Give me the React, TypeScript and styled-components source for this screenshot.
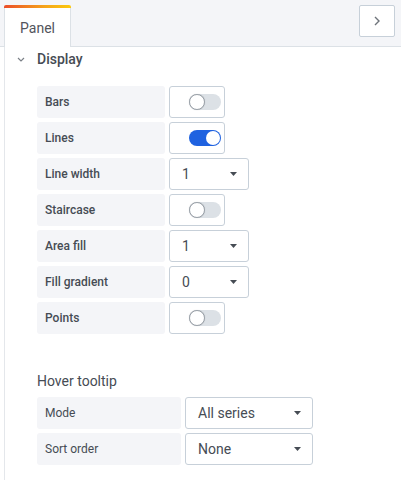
import React from 'react';
import styled, { createGlobalStyle } from 'styled-components';

const Global = createGlobalStyle`
  html, body { margin: 0; padding: 0; background: #fff; }
  body { font-family: Roboto, "Noto Sans", sans-serif; color: #464c54; }
  * { box-sizing: border-box; }
`;

const Page = styled.div`
  width: 401px;
  height: 480px;
  display: flex;
  flex-direction: column;
  background: #fff;
  overflow: hidden;
`;

const TabBar = styled.div`
  height: 47px;
  flex: none;
  background: #f4f5f8;
  border-bottom: 1px solid #dce1e6;
  display: flex;
  align-items: flex-start;
  padding: 0 6px 0 4px;
`;

const Tab = styled.div`
  margin-top: 5px;
  width: 67px;
  height: 42px;
  background: #fff;
  border-left: 1px solid #dce1e6;
  border-right: 1px solid #dce1e6;
  border-top: 3px solid transparent;
  border-image: none;
  position: relative;
  display: flex;
  align-items: center;
  justify-content: center;
  font-size: 14px;
  color: #52545c;
  border-radius: 2px 2px 0 0;
  &::before {
    content: '';
    position: absolute;
    left: -1px;
    right: -1px;
    top: -3px;
    height: 3px;
    border-radius: 2px 2px 0 0;
    background: linear-gradient(90deg, #eb4d2a 0%, #f5a31a 60%, #fbc90e 100%);
  }
`;

const IconButton = styled.div`
  margin-left: auto;
  margin-top: 5px;
  width: 36px;
  height: 32px;
  background: #fff;
  border: 1px solid #c7d0d9;
  border-radius: 2px;
  display: flex;
  align-items: center;
  justify-content: center;
`;

const Content = styled.div`
  flex: 1;
  margin-left: 4px;
  border-left: 1px solid #e4e7eb;
  display: flex;
  flex-direction: column;
`;

const SectionHeader = styled.div`
  height: 24px;
  display: flex;
  align-items: center;
  padding-left: 12px;
  gap: 12px;
  font-size: 14px;
  font-weight: 500;
  color: #464c54;
`;

const FieldList = styled.div<{ $top: number }>`
  margin-top: ${p => p.$top}px;
  padding-left: 32px;
  display: flex;
  flex-direction: column;
  gap: 4px;
`;

const Row = styled.div`
  display: flex;
  gap: 4px;
  height: 32px;
`;

const Label = styled.div<{ $width: number; $weight: number }>`
  width: ${p => p.$width}px;
  height: 32px;
  background: #f4f5f8;
  border-radius: 3px;
  padding: 0 8px;
  display: flex;
  align-items: center;
  font-size: 12px;
  font-weight: ${p => p.$weight};
  color: #464c54;
`;

const SwitchBox = styled.div`
  width: 56px;
  height: 32px;
  border: 1px solid #c7d0d9;
  border-radius: 3px;
  background: #fff;
  display: flex;
  align-items: center;
  justify-content: flex-end;
  padding-right: 3px;
`;

const Track = styled.div<{ $on: boolean }>`
  position: relative;
  width: 32px;
  height: 16px;
  border-radius: 8px;
  background: ${p => (p.$on ? '#1f62e0' : '#dce1e6')};
`;

const Knob = styled.div<{ $on: boolean }>`
  position: absolute;
  top: ${p => (p.$on ? 1 : 0)}px;
  left: ${p => (p.$on ? 17 : 0)}px;
  width: ${p => (p.$on ? 14 : 16)}px;
  height: ${p => (p.$on ? 14 : 16)}px;
  border-radius: 50%;
  background: #fff;
  border: ${p => (p.$on ? 'none' : '1px solid #9aa1a9')};
  box-shadow: ${p => (p.$on ? 'none' : '0 0 1px rgba(0,0,0,0.2)')};
`;

const SelectBox = styled.div<{ $width: number }>`
  width: ${p => p.$width}px;
  height: 32px;
  border: 1px solid #c7d0d9;
  border-radius: 3px;
  background: #fff;
  display: flex;
  align-items: center;
  padding: 0 11px 0 12px;
  font-size: 14px;
  color: #464c54;
`;

const SelectValue = styled.span`
  flex: 1;
`;

const SubTitle = styled.div`
  margin-top: 39px;
  padding-left: 32px;
  font-size: 14px;
  line-height: 16px;
  color: #464c54;
`;

const Caret = () => (
  <svg width="7" height="4" viewBox="0 0 7 4">
    <path d="M0 0 L7 0 L3.5 4 Z" fill="#464c54" />
  </svg>
);

const Switch = ({ on }: { on: boolean }) => (
  <SwitchBox>
    <Track $on={on}>
      <Knob $on={on} />
    </Track>
  </SwitchBox>
);

const Select = ({ value, width }: { value: string; width: number }) => (
  <SelectBox $width={width}>
    <SelectValue>{value}</SelectValue>
    <Caret />
  </SelectBox>
);

type Field = { label: string; kind: 'switch' | 'select'; on?: boolean; value?: string };

const displayFields: Field[] = [
  { label: 'Bars', kind: 'switch', on: false },
  { label: 'Lines', kind: 'switch', on: true },
  { label: 'Line width', kind: 'select', value: '1' },
  { label: 'Staircase', kind: 'switch', on: false },
  { label: 'Area fill', kind: 'select', value: '1' },
  { label: 'Fill gradient', kind: 'select', value: '0' },
  { label: 'Points', kind: 'switch', on: false },
];

export default function App() {
  return (
    <Page>
      <Global />
      <TabBar>
        <Tab>Panel</Tab>
        <IconButton>
          <svg width="6" height="10" viewBox="0 0 6 10">
            <path d="M1 1 L5 5 L1 9" fill="none" stroke="#6e737a" strokeWidth="1.4" />
          </svg>
        </IconButton>
      </TabBar>
      <Content>
        <SectionHeader>
          <svg width="8" height="5" viewBox="0 0 8 5">
            <path d="M1 1 L4 4 L7 1" fill="none" stroke="#7b8087" strokeWidth="1.2" />
          </svg>
          Display
        </SectionHeader>
        <FieldList $top={15}>
          {displayFields.map(f => (
            <Row key={f.label}>
              <Label $width={128} $weight={500}>{f.label}</Label>
              {f.kind === 'switch' ? <Switch on={!!f.on} /> : <Select value={f.value!} width={80} />}
            </Row>
          ))}
        </FieldList>
        <SubTitle>Hover tooltip</SubTitle>
        <FieldList $top={8}>
          <Row>
            <Label $width={144} $weight={400}>Mode</Label>
            <Select value="All series" width={128} />
          </Row>
          <Row>
            <Label $width={144} $weight={400}>Sort order</Label>
            <Select value="None" width={128} />
          </Row>
        </FieldList>
      </Content>
    </Page>
  );
}
